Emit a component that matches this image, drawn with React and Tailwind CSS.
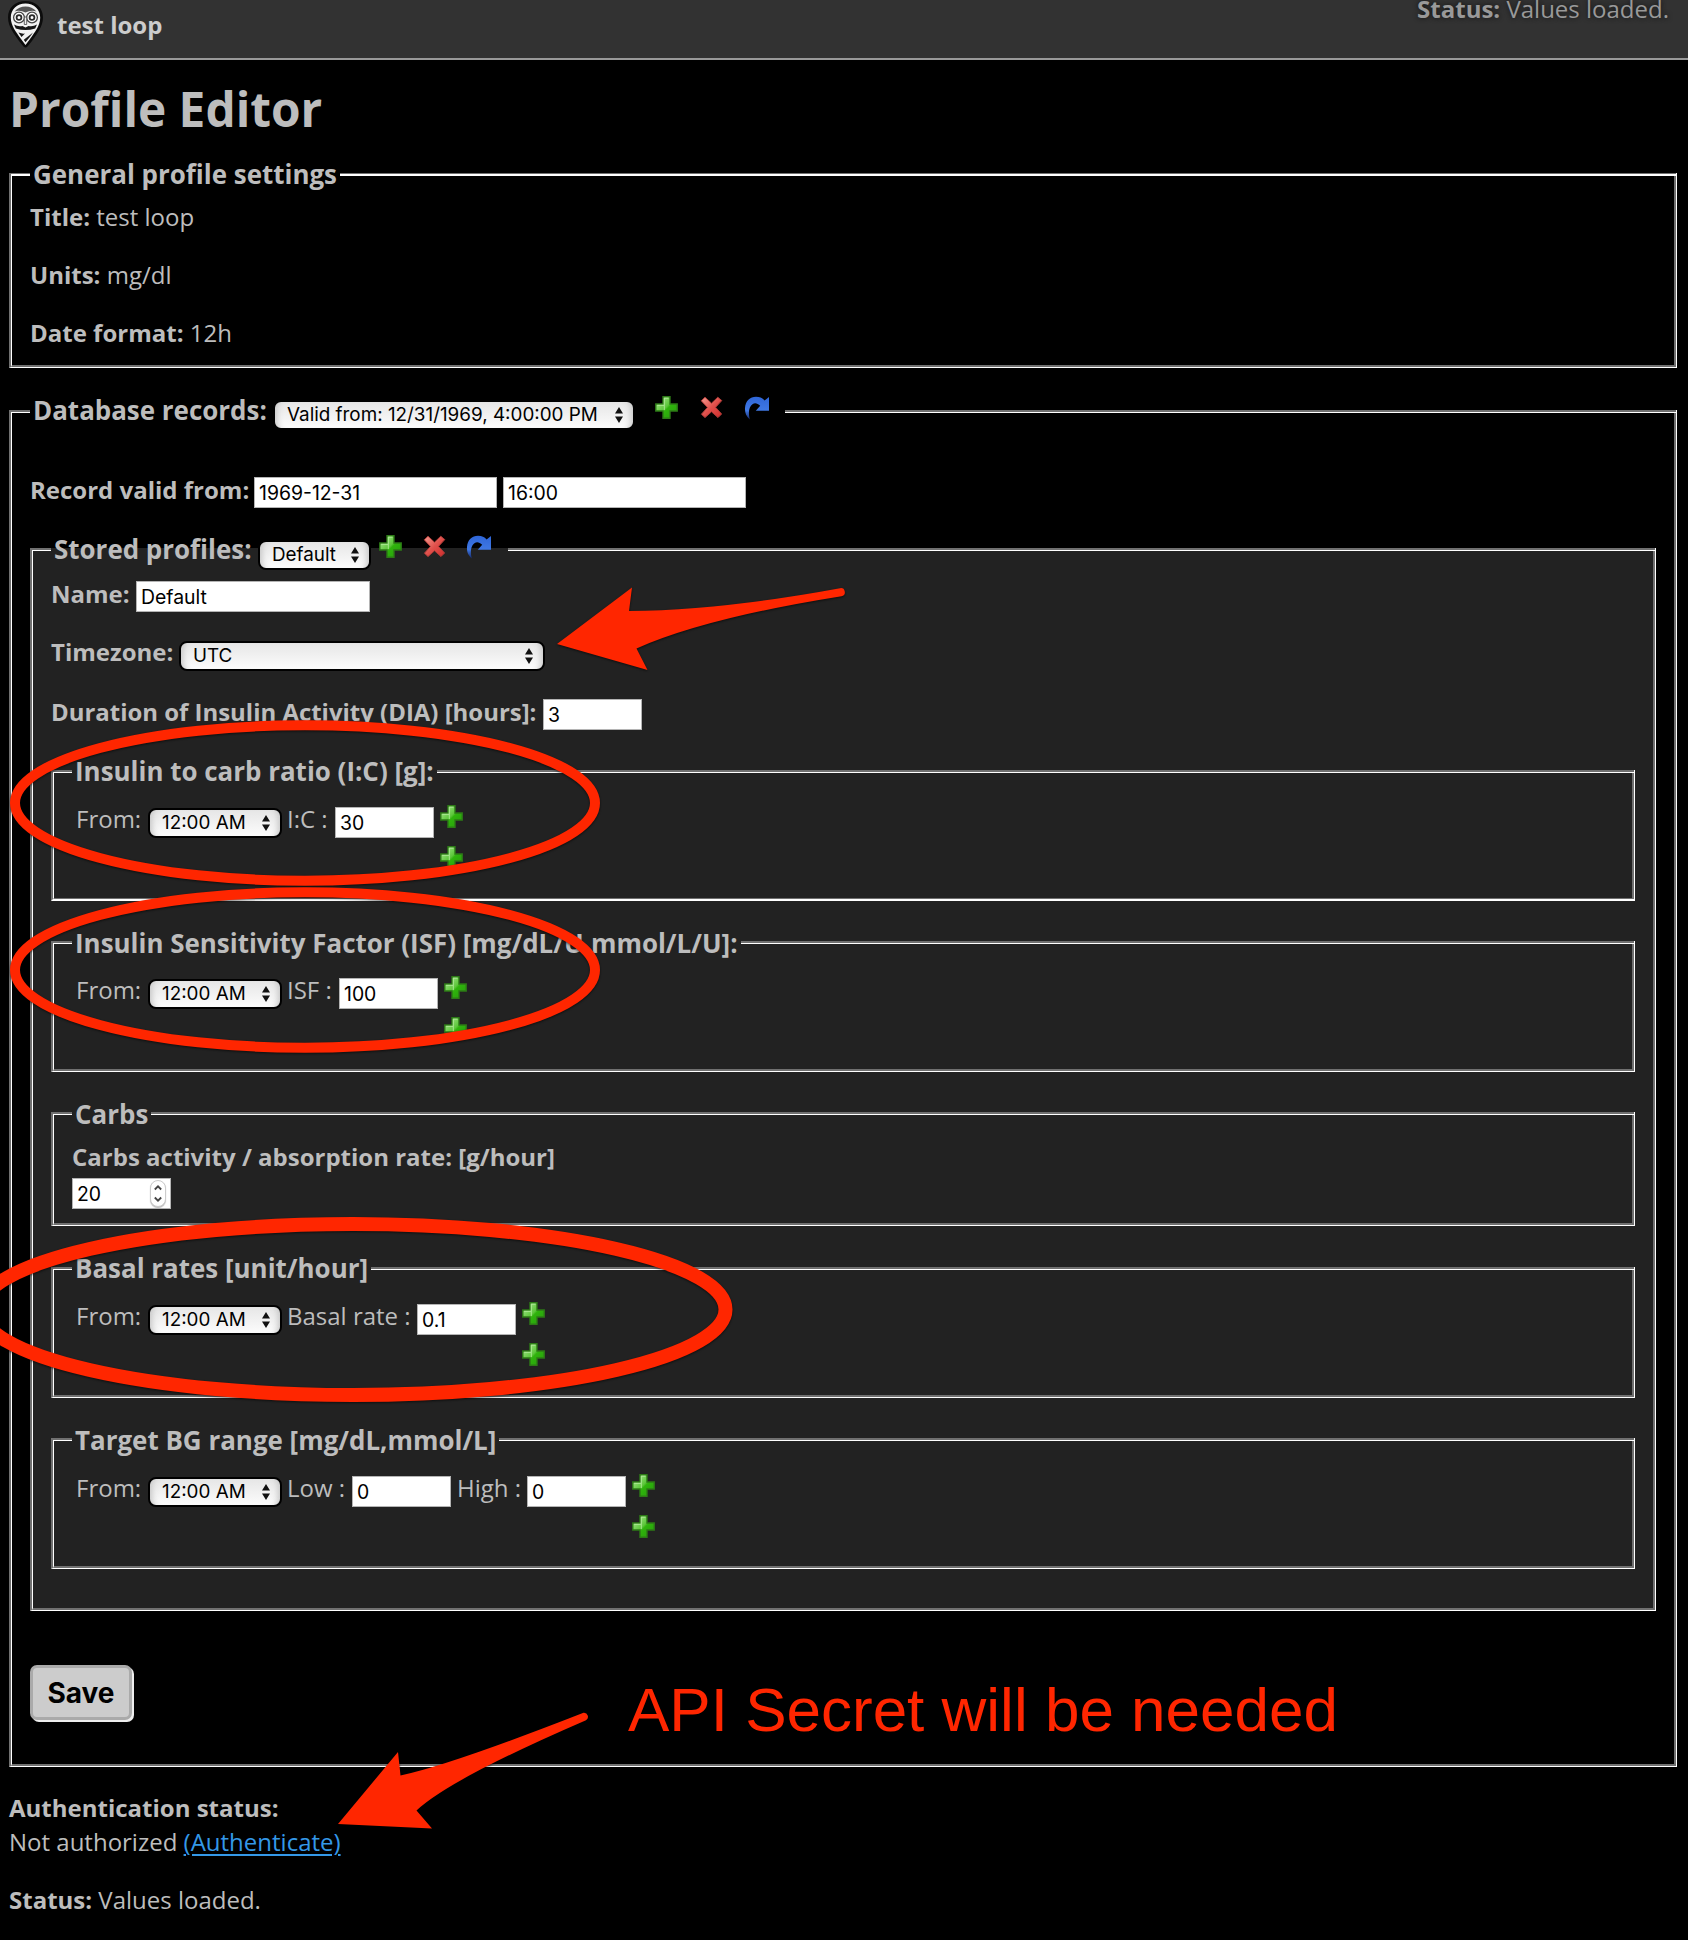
import React from "react";

const cx = (...parts) => parts.filter(Boolean).join(" ");

function OwlLogo() {
  return (
    <svg className="block h-[50px] w-[50px]" viewBox="0 0 50 50" fill="none">
      <path d="M25.5 1C15 1 8 8 8 17.500c0 9 6 16 11 23.500l4.500 5.500q2 2 4 0L32 41c5-7.500 11-14.500 11-23.500C43 8 36 1 25.500 1Z" fill="#0c0c0c" />
      <path d="M25.500 3.500C17 3.500 10.800 9.500 10.800 17.500c0 8 5.200 14.500 10.200 21.500l4.500 6 4.500-6c5-7 10.200-13.500 10.200-21.500 0-8-6.200-14-14.700-14Z" fill="#f2f2f2" />
      <path d="M14.500 11.500Q19 6.500 25.500 6.500T36.500 11.500Q31 9.800 25.500 12.500 20 9.800 14.500 11.500Z" fill="#555" />
      <circle cx="19" cy="17.500" r="5.400" fill="#fff" stroke="#444" strokeWidth="1.300" />
      <circle cx="32" cy="17.500" r="5.400" fill="#fff" stroke="#444" strokeWidth="1.300" />
      <circle cx="19" cy="17.500" r="2.400" fill="#fff" stroke="#2a2a2a" strokeWidth="1.800" />
      <circle cx="32" cy="17.500" r="2.400" fill="#fff" stroke="#2a2a2a" strokeWidth="1.800" />
      <path d="M24.300 17v7.500h2.400V17Z" fill="#eee" stroke="#444" strokeWidth=".8" />
      <path d="M14 24.500q4 2.500 8.500 1.500l3 1.500 3-1.500q4.500 1 8.500-1.500l-1.800 4Q25.500 31.500 15.800 28.500Z" fill="#161616" />
      <path d="M18.500 32.500q3.500 1.500 6.500 1l-3.500 3.500Z" fill="#161616" />
      <path d="M33 32.500 23.800 39.800l1.700 2.500 4.500-5.500Z" fill="#161616" />
    </svg>
  );
}

function PlusIcon() {
  return (
    <svg className="block h-[23px] w-[23px] shrink-0" viewBox="0 0 23 23">
      <defs>
        <linearGradient id="plusFill" x1="0" y1="0" x2="1" y2="1">
          <stop offset="0.1" stopColor="#a4e48a" />
          <stop offset="0.48" stopColor="#5cc63a" />
          <stop offset="0.55" stopColor="#2fb30c" />
          <stop offset="1" stopColor="#279a0c" />
        </linearGradient>
      </defs>
      <path d="M8 .8h7v7.200h7.200v7H15v7.200H8V15H.8V8H8Z" fill="url(#plusFill)" stroke="#2c7a16" strokeWidth="1.400" />
      <path d="M9.300 14V9.300H2.200M9.300 9.300V2.200h4.200" fill="none" stroke="#b9efa4" strokeWidth="1" opacity=".8" />
    </svg>
  );
}

function DeleteIcon() {
  return (
    <svg className="block h-[23px] w-[23px] shrink-0" viewBox="0 0 23 23">
      <defs>
        <linearGradient id="crossFill" x1="0" y1="0" x2="1" y2="1">
          <stop offset="0" stopColor="#f59a90" />
          <stop offset="0.5" stopColor="#e0504b" />
          <stop offset="1" stopColor="#cf2c2c" />
        </linearGradient>
      </defs>
      <path
        d="M5 1.200 11.500 7.200 17.800 1.200 21.800 4.600 15.600 11.300 21.600 18 18 21.600 11.500 15.800 5 21.600 1.400 18.200 7.400 11.400 1.200 4.800Z"
        fill="url(#crossFill)"
        stroke="#a93a36"
        strokeWidth="1"
        strokeLinejoin="round"
      />
    </svg>
  );
}

function CloneIcon() {
  return (
    <svg className="block h-[24px] w-[26px] shrink-0" viewBox="0 0 26 24">
      <defs>
        <linearGradient id="cloneFill" x1="0" y1="0" x2="0" y2="1">
          <stop offset="0" stopColor="#2f66d8" />
          <stop offset="0.6" stopColor="#3f78e4" />
          <stop offset="1" stopColor="#14286a" />
        </linearGradient>
      </defs>
      <path d="M5.800 23.500C1.800 20 .8 16.500 1 12 1.400 5 6 .8 12 .8c4 0 6.500 1.200 8.600 3.600L25 1v13.700H11.800l4.400-4.900C13.800 7.400 11 6.500 8.800 8 5.200 10.300 3.800 16 5.800 23.500Z" fill="url(#cloneFill)" />
    </svg>
  );
}

function Select({ children, className }) {
  return (
    <div
      className={cx(
        "flex h-[30px] shrink-0 items-center justify-between rounded-[8px] border-2 border-black bg-linear-to-b from-[#e6e6e6] to-[#fcfcfc] pr-[10px] pl-[12px] font-[Inter,sans-serif] text-[18.850px] leading-[26px] font-normal whitespace-nowrap text-black shadow-[inset_8px_0_6px_-6px_#c4c4c4,inset_-8px_0_6px_-6px_#c4c4c4]",
        className
      )}
    >
      <span>{children}</span>
      <svg className="h-[16px] w-[8px]" viewBox="0 0 8 16">
        <path d="M4 0 8 6.500H0ZM4 16 0 9.500h8Z" fill="#111" />
      </svg>
    </div>
  );
}

function Field({ children, className }) {
  return (
    <div
      className={cx(
        "flex h-[31px] shrink-0 items-center justify-between border border-[#b4b4b4] bg-white pl-[4px] font-[Inter,sans-serif] text-[19.400px] leading-[29px] text-black",
        className
      )}
    >
      {typeof children === "string" ? <span className="pt-[2px]">{children}</span> : children}
    </div>
  );
}

function Group({ legend, className, bodyClassName, legendClassName = "-mt-[17px]", thinTop, thinBottom, children }) {
  const line = cx("h-[3px] border-t-[#707070] border-b-white", thinTop ? "border-t border-b-2" : "border-t-2 border-b");
  return (
    <section className={cx("flex flex-col border-r border-l-2 border-r-white border-l-[#707070] border-b-white", thinBottom ? "border-b-2" : "border-b", className)}>
      <div className="flex h-[3px] shrink-0">
        <div className={cx("w-[19px] shrink-0", line)} />
        <div className="h-[3px] shrink-0 px-[3px]">
          <div className={cx("flex h-[36px] items-start text-[25.950px] leading-[36px] font-bold whitespace-nowrap", legendClassName)}>{legend}</div>
        </div>
        <div className={cx("flex-1", line)} />
      </div>
      <div className={cx("flex-1 border-l border-r-2 border-l-white border-r-[#707070] border-b-[#707070]", thinBottom ? "border-b" : "border-b-2", bodyClassName)}>
        {children}
      </div>
    </section>
  );
}

function TimeRow({ fields }) {
  return (
    <div className="flex h-[64px] items-start pl-[22px] leading-[32px]">
      <span className="w-[72px]">From:</span>
      <Select className="mt-[5px] mr-[5px] w-[134px]">12:00 AM</Select>
      {fields.map((f) => (
        <React.Fragment key={f.label}>
          <span className={cx("whitespace-nowrap", f.width)}>{f.label}</span>
          <Field className="mt-[4px] mr-[6px] w-[99px]">{f.value}</Field>
        </React.Fragment>
      ))}
      <div className="mt-[2px] flex flex-col gap-[18px]">
        <PlusIcon />
        <PlusIcon />
      </div>
    </div>
  );
}

function Annotations() {
  return (
    <div className="pointer-events-none absolute inset-0 overflow-hidden">
      <svg className="h-[1940px] w-[1688px] drop-shadow-[0_1px_1px_rgba(0,0,0,0.6)]" viewBox="0 0 1688 1940" fill="none">
        <g stroke="#ff2600">
          <ellipse cx="305" cy="803" rx="290" ry="77.800" strokeWidth="10" />
          <ellipse cx="305" cy="970" rx="290" ry="77.800" strokeWidth="10" />
          <ellipse cx="353" cy="1309.500" rx="372.500" ry="85.500" strokeWidth="14" />
        </g>
        <g fill="#ff2600">
          <path d="M557 644 632 587.500 629 611Q722 610 840 588.200a4 4 0 0 1 1.500 8Q705 618 636.500 648.500L647.500 670Z" />
          <path d="M338 1824 398 1752 400.500 1775.500Q450 1765 583.500 1712.800a4 4 0 0 1 2.500 7.400Q450 1779 416.500 1810.500L432 1828.500Z" />
        </g>
      </svg>
      <p className="absolute top-[1674px] left-[628px] font-['Liberation_Sans',Arial,sans-serif] text-[62px] leading-[72px] whitespace-nowrap text-[#ff2600]">
        API Secret will be needed
      </p>
    </div>
  );
}

export default function App() {
  return (
    <div className="relative h-[1940px] w-[1688px] overflow-hidden bg-black font-['Open_Sans',sans-serif] text-[24px] leading-[32px] text-[#bdbdbd]">
      <header className="flex h-[60px] items-start justify-between border-b-2 border-[#999] bg-[#323232]">
        <div className="flex">
          <OwlLogo />
          <span className="mt-[9px] ml-[7px] font-bold text-[#ccc]">test loop</span>
        </div>
        <div className="-mt-[7px] mr-[19px] text-[#999] [text-shadow:0_0_5px_#111]">
          <b>Status:</b> Values loaded.
        </div>
      </header>

      <main className="pr-[11px] pl-[9px]">
        <h1 className="mt-[17px] text-[47.800px] leading-[64px] font-bold">Profile Editor</h1>

        <Group legend="General profile settings" thinTop className="mt-[32px] h-[195px]" bodyClassName="flex flex-col gap-[26px] pt-[25px] pl-[18px]">
          <p><b>Title:</b> test loop</p>
          <p><b>Units:</b> mg/dl</p>
          <p><b>Date format:</b> 12h</p>
        </Group>

        <Group
          className="mt-[42px] h-[1357px]"
          bodyClassName="px-[18px] pt-[61px]"
          legendClassName="-mt-[18px]"
          legend={
            <>
              <span className="w-[240px]">Database records:</span>
              <Select className="mt-[8px] mr-[20px] w-[362px]">Valid from: 12/31/1969, 4:00:00 PM</Select>
              <div className="mt-[4px] mr-[12px] flex gap-[21.500px]">
                <PlusIcon />
                <DeleteIcon />
                <CloneIcon />
              </div>
            </>
          }
        >
          <div className="flex h-[32px] items-start">
            <b className="w-[224px]">Record valid from:</b>
            <Field className="mt-[3px] mr-[6px] w-[243px]">1969-12-31</Field>
            <Field className="mt-[3px] w-[243px]">16:00</Field>
          </div>

          <Group
            className="mt-[42px] h-[1063px] bg-[#222]"
            bodyClassName="px-[18px] pt-[26px]"
            legend={
              <>
                <span className="w-[204px]">Stored profiles:</span>
                <Select className="mt-[9px] mr-[8px] w-[113px]">Default</Select>
                <div className="mt-[4px] mr-[13px] flex gap-[20.500px]">
                  <PlusIcon />
                  <DeleteIcon />
                  <CloneIcon />
                </div>
              </>
            }
          >
            <div className="flex flex-col">
              <div className="flex h-[59px] items-start pt-[1px]">
                <b className="w-[85px]">Name:</b>
                <Field className="mt-[3px] w-[234px]">Default</Field>
              </div>
              <div className="flex h-[59px] items-start">
                <b className="w-[128px]">Timezone:</b>
                <Select className="mt-[5px] w-[366px]">UTC</Select>
              </div>
              <div className="flex h-[32px] items-start pt-[1px]">
                <b className="w-[492px] text-[23.950px] whitespace-nowrap">Duration of Insulin Activity (DIA) [hours]:</b>
                <Field className="mt-[3px] w-[99px]">3</Field>
              </div>
            </div>

            <Group legend="Insulin to carb ratio (I:C) [g]:" thinBottom className="mt-[43px] h-[131px]" bodyClassName="pt-[30px]">
              <TimeRow fields={[{ label: "I:C :", value: "30", width: "w-[48px]" }]} />
            </Group>

            <Group legend="Insulin Sensitivity Factor (ISF) [mg/dL/U,mmol/L/U]:" legendClassName="-mt-[16px]" className="mt-[40px] h-[131px]" bodyClassName="pt-[30px]">
              <TimeRow fields={[{ label: "ISF :", value: "100", width: "w-[52px]" }]} />
            </Group>

            <Group legend="Carbs" legendClassName="-mt-[16px]" className="mt-[40px] h-[114px]" bodyClassName="pt-[26px] pl-[18px]">
              <b className="block">Carbs activity / absorption rate: [g/hour]</b>
              <Field className="mt-[5px] w-[99px] pr-[4px]">
                <span className="pt-[2px]">20</span>
                <span className="flex h-[27px] w-[16px] items-center justify-center rounded-full border border-[#ccc] bg-white shadow-[0_1px_1px_#bbb]">
                  <svg className="h-[17px] w-[8px]" viewBox="0 0 8 17" fill="none" stroke="#444" strokeWidth="1.800">
                    <path d="M.8 4.500 4 1.300 7.200 4.500M.8 12.500 4 15.700 7.200 12.500" />
                  </svg>
                </span>
              </Field>
            </Group>

            <Group legend="Basal rates [unit/hour]" className="mt-[41px] h-[131px]" bodyClassName="pt-[30px]">
              <TimeRow fields={[{ label: "Basal rate :", value: "0.1", width: "w-[130px]" }]} />
            </Group>

            <Group legend="Target BG range [mg/dL,mmol/L]" legendClassName="-mt-[16px]" className="mt-[40px] h-[131px]" bodyClassName="pt-[31px]">
              <TimeRow
                fields={[
                  { label: "Low :", value: "0", width: "w-[65px]" },
                  { label: "High :", value: "0", width: "w-[70px]" },
                ]}
              />
            </Group>
          </Group>

          <button className="mt-[54px] block h-[55px] w-[102px] rounded-[7px] border-[3px] border-[#aaa] bg-[#ccc] pt-[1px] text-center font-[Inter,sans-serif] text-[28px] leading-[49px] font-bold text-black shadow-[2px_2px_0_#eee]">
            Save
          </button>
        </Group>

        <div className="mt-[24px] leading-[34px]">
          <p className="font-bold">Authentication status:</p>
          <p>
            Not authorized <a className="text-[#3498e8] underline decoration-[1.500px] underline-offset-[3px]">(Authenticate)</a>
          </p>
          <p className="mt-[24px]"><b>Status:</b> Values loaded.</p>
        </div>
      </main>

      <Annotations />
    </div>
  );
}
